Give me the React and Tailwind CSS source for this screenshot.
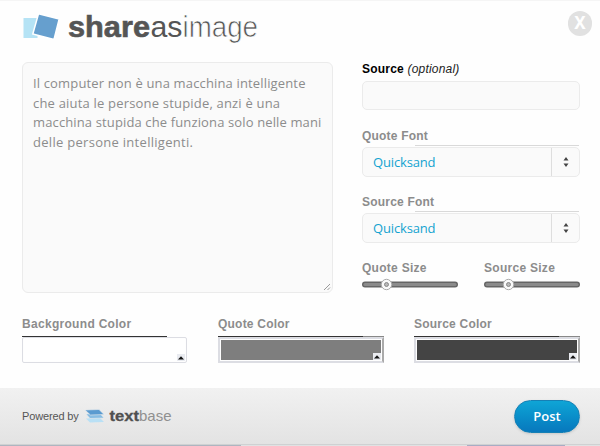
import clsx from 'clsx';

const quoteLines = [
    { text: 'Il computer non è una macchina intelligente', tracking: 'tracking-[0.15px]' },
    { text: 'che aiuta le persone stupide, anzi è una', tracking: 'tracking-[0.19px]' },
    { text: 'macchina stupida che funziona solo nelle mani', tracking: 'tracking-[0.13px]' },
    { text: 'delle persone intelligenti.', tracking: 'tracking-[0.29px]' },
];

function Logo() {
    return (
        <svg width="240" height="40" viewBox="0 0 240 40" role="img" aria-label="shareasimage">
            <path d="M1.500 8h14v20h-14z" fill="#b5e3f5" />
            <path d="M16.500 3.800 37.200 9 32 29.500 10.800 24z" fill="#669fce" stroke="#fff" strokeWidth="1.500" />
            <g fontFamily="'Liberation Sans', Arial, sans-serif" fontSize="29">
                <text x="46" y="26.5" fontWeight="700" fill="#555" stroke="#555" strokeWidth="0.6" textLength="82" lengthAdjust="spacingAndGlyphs">share</text>
                <text x="128.500" y="26.5" fill="#555" textLength="32" lengthAdjust="spacingAndGlyphs">as</text>
                <text x="160.500" y="26.5" fill="#555" stroke="#fff" strokeWidth="0.7" textLength="75.500" lengthAdjust="spacingAndGlyphs">image</text>
            </g>
        </svg>
    );
}

function TextbaseLogo() {
    return (
        <svg width="90" height="24" viewBox="0 0 90 24" role="img" aria-label="textbase">
            <path d="m1 14.500 14-.5 4 4-14 .5z" fill="#b9e0f5" />
            <path d="m1 10 14-.5 4 4.500-14 .5z" fill="#88bde3" stroke="#ececec" strokeWidth="0.6" />
            <path d="m0 6 14-.5 5 5-13.500.5z" fill="#5b9bd0" stroke="#ececec" strokeWidth="0.6" />
            <g fontFamily="'Liberation Sans', Arial, sans-serif" fontSize="15">
                <text x="24.500" y="16.500" fontWeight="700" fill="#505050" stroke="#505050" strokeWidth="0.3" textLength="29.500" lengthAdjust="spacingAndGlyphs">text</text>
                <text x="54" y="16.500" fill="#909090" textLength="32.500" lengthAdjust="spacingAndGlyphs">base</text>
            </g>
        </svg>
    );
}

function Label({ children, className }) {
    return (
        <div className={clsx('h-4 whitespace-nowrap text-[12px] leading-4 font-bold text-[#8c8c8c]', className)}>
            {children}
        </div>
    );
}

function FontSelect({ label }) {
    return (
        <div className="h-[66px]">
            <Label className="pt-px tracking-[0.2px]">{label}</Label>
            <div className="mt-0.5 ml-[53px] h-px w-[164px] bg-[#d9d9d9]" />
            <div className="mt-px flex h-[30px] w-[218px] rounded-[5px] border border-[#ebebeb] bg-[#fafafa]">
                <div className="flex-1 pl-[10px] font-['Open_Sans',sans-serif] text-[13px] leading-7 tracking-[-0.15px] text-[#14a3d0]">
                    Quicksand
                </div>
                <div className="flex w-7 items-center justify-center border-l border-[#dedede]">
                    <svg width="6" height="10" viewBox="0 0 6 10" fill="#444">
                        <path d="M3 0 5.500 3.500h-5zM3 10 .5 6.500h5z" />
                    </svg>
                </div>
            </div>
        </div>
    );
}

function SizeSlider({ label }) {
    return (
        <div className="w-24">
            <Label className="pt-px tracking-[0.28px]">{label}</Label>
            <svg className="mt-[3px] block" width="96" height="13" viewBox="0 0 96 13">
                <rect x="0" y="3.500" width="96" height="6" rx="3" fill="#666" />
                <rect x="1.500" y="5" width="93" height="3" rx="1.500" fill="#8b8b8b" />
                <circle cx="24.500" cy="6.500" r="5.200" fill="#fafafa" stroke="#aaa" />
                <circle cx="24.500" cy="6.500" r="2" fill="#b9b9b9" stroke="#777" strokeWidth="0.8" />
            </svg>
        </div>
    );
}

function ColorField({ label, color, light, className }) {
    return (
        <div className={className}>
            <Label className={light ? 'tracking-[0.3px]' : 'tracking-[0.22px]'}>{label}</Label>
            <div className={clsx('mt-1 flex h-px', light ? 'w-[145px]' : 'w-[166px]')}>
                <div className="w-[145px] bg-[#333]" />
                <div className="flex-1 bg-[#888]" />
            </div>
            <div
                className={clsx(
                    'flex h-[26px] items-end justify-end border-[#dcdde3] p-px',
                    light ? 'w-[165px] rounded-[2px] border' : 'w-[166px] border-2 border-r-[#aaa]',
                )}
            >
                <div className={clsx('flex h-full w-full items-end justify-end', color)}>
                    <div className="flex h-[7px] w-2 items-center justify-center bg-[#e9ebf0]">
                        <svg width="6" height="4" viewBox="0 0 6 4">
                            <path d="M3 .3 6 3.500H0z" fill="#111" />
                        </svg>
                    </div>
                </div>
            </div>
        </div>
    );
}

export default function App() {
    return (
        <main className="flex h-[446px] w-[600px] flex-col overflow-hidden bg-[#fefefe] font-['Liberation_Sans',Arial,sans-serif]">
            <header className="flex h-[62px] items-start justify-between border-t border-[#f5f5f5] pt-[9px] pr-2 pl-[22px]">
                <Logo />
                <button type="button" aria-label="Close" className="mt-px flex h-[25px] w-6 items-center justify-center rounded-full bg-[#e1e1e1] pb-0.5 font-['Noto_Sans',sans-serif] text-[17px] leading-none font-bold text-white">
                    X
                </button>
            </header>

            <section className="flex h-[254px] justify-between pr-5 pl-[22px]">
                <div className="flex h-[231px] w-[311px] flex-col justify-between rounded-[6px] border border-[#ebebeb] bg-[#fafafa] pt-[11px] pl-[10px]">
                    <p className="font-['Open_Sans',sans-serif] text-[13px] leading-[19.5px] whitespace-nowrap text-[#8c8c8c]">
                        {quoteLines.map(({ text, tracking }) => (
                            <span key={text} className={clsx('block', tracking)}>{text}</span>
                        ))}
                    </p>
                    <svg className="self-end" width="9" height="9" viewBox="0 0 9 9" stroke="#999">
                        <path d="M1 7 7 1M4.500 7 7 4.500" />
                    </svg>
                </div>

                <div className="w-[218px]">
                    <div className="h-4 text-[12px] leading-[14px] tracking-[0.2px] text-[#222]">
                        <b className="text-black">Source</b> <i>(optional)</i>
                    </div>
                    <div className="mt-[3px] mb-[17px] h-[29px] rounded-[5px] border border-[#ebebeb] bg-[#fafafa]" />
                    <FontSelect label="Quote Font" />
                    <FontSelect label="Source Font" />
                    <div className="flex justify-between">
                        <SizeSlider label="Quote Size" />
                        <SizeSlider label="Source Size" />
                    </div>
                </div>
            </section>

            <section className="flex h-[72px] pl-[22px]">
                <ColorField label="Background Color" light color="bg-white" className="w-[196px]" />
                <ColorField label="Quote Color" color="bg-[#7e7e7e]" className="w-[196px]" />
                <ColorField label="Source Color" color="bg-[#444]" className="w-[166px]" />
            </section>

            <footer className="flex h-14 items-center justify-between bg-linear-to-b from-[#f1f1f1] to-[#e3e3e3] pr-5 pl-[22px]">
                <div className="flex items-center">
                    <span className="w-[63px] text-[11px] tracking-[-0.15px] whitespace-nowrap text-[#555]">Powered by</span>
                    <TextbaseLogo />
                </div>
                <button type="button" className="h-[33px] w-[66px] rounded-full border border-[#1680b5] bg-linear-to-b from-[#0fa5d6] to-[#0878bd] pt-0.5 font-['Open_Sans',sans-serif] text-[13px] font-semibold text-white shadow-sm">
                    Post
                </button>
            </footer>
            <div className="h-px bg-[#cfd1d2]" />
            <div className="flex h-px bg-[#e0e2e3]">
                <div className="w-[241px] bg-[#aeb5c0]" />
                <div className="ml-[226px] w-[98px] bg-[#a8acc4]" />
            </div>
        </main>
    );
}
